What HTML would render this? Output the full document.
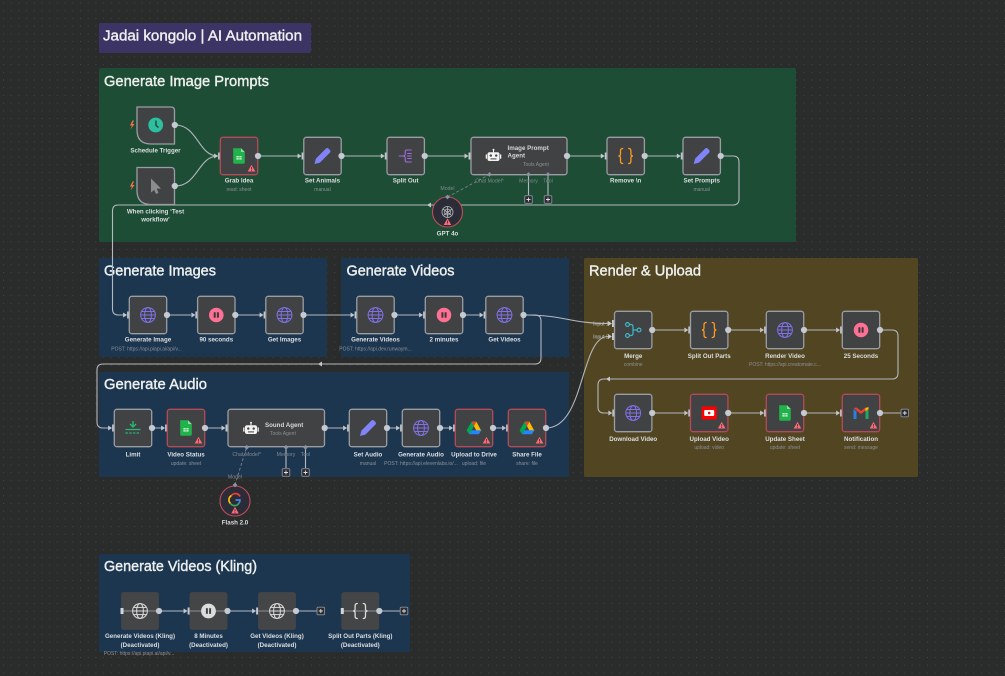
<!DOCTYPE html>
<html><head><meta charset="utf-8"><title>Jadai kongolo | AI Automation</title>
<style>
html,body{margin:0;padding:0;background:#2a2b2b;width:1005px;height:676px;overflow:hidden}
svg{display:block;font-family:"Liberation Sans",sans-serif;filter:blur(.3px)}
.h{fill:#eef0ee;stroke:#eef0ee;stroke-width:.38;font-size:14.5px}
.l{fill:#dcdee0;font-size:6.2px;font-weight:700;text-anchor:middle}
.s{fill:#8d9096;font-size:5px;text-anchor:middle}
.p{fill:#85888f;font-size:5.2px;text-anchor:middle}
.w{fill:none;stroke:#b4b8bf;stroke-width:1.1}
</style></head><body>
<svg width="1005" height="676" viewBox="0 0 1005 676" xmlns="http://www.w3.org/2000/svg">
<defs>
<pattern id="dots" x="3" y="2.5" width="7.7" height="7.7" patternUnits="userSpaceOnUse"><rect width="1" height="1" fill="#434444"/></pattern>
<g id="in"><path d="M-6 -2.5L-2 0L-6 2.5Z" fill="#c3c7ce"/><rect x="-2" y="-3.5" width="2.4" height="7" fill="#c3c7ce"/></g>
<circle id="out" r="3.1" fill="#c5c9d2"/>
<g id="box"><rect x="-18.7" y="-18.7" width="37.400" height="37.400" rx="2.500" fill="#414243" stroke="#9a9ea3" stroke-width="1.300"/></g>
<g id="warn"><path d="M0 -3.600L3.800 3H-3.800Z" fill="#ff6b76"/><rect x="-.4" y="-1.400" width=".8" height="2.400" fill="#3a2b30"/><rect x="-.4" y="1.500" width=".8" height=".8" fill="#3a2b30"/></g>
<g id="rbox"><rect x="-18.700" y="-18.700" width="37.400" height="37.400" rx="2.500" fill="#414243" stroke="#b54a57" stroke-width="1.300"/><use href="#warn" x="12.500" y="12.500"/></g>
<g id="n"><use href="#in" x="-18.900"/><use href="#box"/><use href="#out" x="19"/></g>
<g id="r"><use href="#in" x="-18.900"/><use href="#rbox"/><use href="#out" x="19"/></g>
<g id="globe" fill="none" stroke="#7f72e6" stroke-width="1"><circle r="7.400"/><ellipse rx="3.400" ry="7.400"/><path d="M-7.400 0H7.400M-6.500 -3.500H6.500M-6.500 3.500H6.500"/></g>
<g id="pause"><circle r="7.300" fill="#ff7095"/><rect x="-2.600" y="-2.800" width="2" height="5.600" rx=".5" fill="#39393b"/><rect x=".6" y="-2.800" width="2" height="5.600" rx=".5" fill="#39393b"/></g>
<path id="pencil" d="M-8 8L-6.600 2.600L3.400 -7.400Q4.800 -8.500 6 -7.400L7.400 -6Q8.500 -4.800 7.400 -3.400L-2.600 6.600Z" fill="#8183f8"/>
<g id="sheet"><path d="M-5.800 -7.800H2L5.800 -4V6.300Q5.800 7.800 4.300 7.800H-4.300Q-5.800 7.800 -5.800 6.300Z" fill="#21b34b"/><path d="M2 -7.800L5.800 -4H2Z" fill="#8fdca6"/><rect x="-2.600" y="0" width="5.200" height="3.600" fill="#c9efd4"/><path d="M0 0V3.600M-2.600 1.800H2.600" stroke="#21b34b" stroke-width=".6"/></g>
<g id="braces" fill="none" stroke="#ff9a1f" stroke-width="1.300" stroke-linecap="round"><path d="M-3 -7.500Q-5.200 -7.500 -5.200 -5V-2Q-5.200 0 -7.300 0Q-5.200 0 -5.200 2V5Q-5.200 7.500 -3 7.500"/><path d="M3 -7.500Q5.200 -7.500 5.200 -5V-2Q5.200 0 7.300 0Q5.200 0 5.200 2V5Q5.200 7.500 3 7.500"/></g>
<g id="robot"><rect x="-6" y="-3.800" width="12" height="8.800" rx="2" fill="#f3f3f3"/><rect x="-7.800" y="-1.600" width="1.300" height="4.400" rx=".5" fill="#f3f3f3"/><rect x="6.500" y="-1.600" width="1.300" height="4.400" rx=".5" fill="#f3f3f3"/><rect x="-.5" y="-6" width="1" height="2.400" fill="#f3f3f3"/><circle cy="-6.200" r="1" fill="#f3f3f3"/><circle cx="-2.700" cy="-.4" r="1.200" fill="#414243"/><circle cx="2.700" cy="-.4" r="1.200" fill="#414243"/><rect x="-3" y="2.400" width="6" height="1" fill="#414243"/></g>
<g id="drive"><path d="M-2.400 -6.200H2.400L7.400 3H2.600Z" fill="#fbbc04"/><path d="M-2.400 -6.200L0 -1.800L-4.900 6.200L-7.400 2.200Z" fill="#00a94f"/><path d="M-4.900 6.200L-2.400 2.200H7.400L4.900 6.200Z" fill="#2684fc"/><path d="M-2.400 -6.200H2.400L0 -1.800Z" fill="#ea4335"/></g>
<g id="dia"><path d="M0 -2.400L2.400 0L0 2.400L-2.400 0Z" fill="#8d91a0"/></g>
<g id="plus"><rect x="-3.800" y="-3.800" width="7.600" height="7.600" rx="1.200" fill="#2b2d33" stroke="#8a8e96" stroke-width=".9"/><path d="M-2 0H2M0 -2V2" stroke="#dedede" stroke-width=".9"/></g>
<g id="dbox"><rect x="-18.900" y="-18.900" width="37.800" height="37.800" rx="2.500" fill="#444547"/><path d="M-18.900 0H18.900" stroke="#8e9094" stroke-width="1"/></g>
<g id="dglobe" fill="#444547" stroke="#dcdcdc" stroke-width="1"><circle r="7.400"/><ellipse rx="3.400" ry="7.400"/><path d="M-7.400 0H7.400M-6.500 -3.600H6.500M-6.500 3.600H6.500"/></g>
</defs>

<rect width="1005" height="676" fill="#2a2b2b"/>
<rect width="1005" height="676" fill="url(#dots)"/>

<rect x="99" y="23" width="212" height="30" rx="1.500" fill="#3c3465"/>
<rect x="99" y="68" width="697" height="174" rx="1.500" fill="#1d4d35"/>
<rect x="99" y="258" width="228" height="99" rx="1.500" fill="#1c3650"/>
<rect x="341" y="258" width="228" height="99" rx="1.500" fill="#1c3650"/>
<rect x="584" y="258" width="334" height="219" rx="1.500" fill="#514522"/>
<rect x="99" y="372" width="470" height="105" rx="1.500" fill="#1c3650"/>
<rect x="99" y="554" width="311" height="98" rx="1.500" fill="#1c3650"/>

<text class="h" x="103" y="40.500" textLength="199" lengthAdjust="spacingAndGlyphs">Jadai kongolo | AI Automation</text>
<text class="h" x="104" y="86" textLength="165" lengthAdjust="spacingAndGlyphs">Generate Image Prompts</text>
<text class="h" x="104" y="275.500" textLength="112" lengthAdjust="spacingAndGlyphs">Generate Images</text>
<text class="h" x="346.500" y="275.500" textLength="108" lengthAdjust="spacingAndGlyphs">Generate Videos</text>
<text class="h" x="589" y="275.500" textLength="112" lengthAdjust="spacingAndGlyphs">Render &amp; Upload</text>
<text class="h" x="104" y="389" textLength="103" lengthAdjust="spacingAndGlyphs">Generate Audio</text>
<text class="h" x="104" y="571" textLength="153" lengthAdjust="spacingAndGlyphs">Generate Videos (Kling)</text>

<!-- wires -->
<g class="w">
<path d="M175 125C198 125 198 156 218 156"/>
<path d="M175 186C198 186 198 156 218 156"/>
<path d="M258 156H298M342 156H381M425 156H465M567 156H601M645 156H677"/>
<path d="M721 156H733Q739 156 739 162V199Q739 205 733 205H118Q112.500 205 112.500 211V309Q112.500 315 118.500 315H123"/>
<path d="M167 315H191M235.500 315H260M304 315H351M394.500 315H419M463 315H480"/>
<path d="M524 315C565 315 570 323.500 608 323.500"/>
<path d="M524 315H535Q541 315 541 321V358Q541 364 535 364H103Q97 364 97 370V422Q97 428 103 428H108"/>
<path d="M546 428C585 428 580 336.500 608 336.500"/>
<path d="M652 330H684M728 330H760M804 330H836"/>
<path d="M880 330H892Q898 330 898 336V373Q898 379 892 379H604Q598 379 598 385V407Q598 413 604 413H608"/>
<path d="M652 413H684M728 413H760M804 413H836M880 413H901"/>
<path d="M152 428H161M205 428H222M325 428H343M387 428H396M440 428H449M493 428H502"/>
<path d="M528.500 175V195M548 175V195M286 448V468M305.500 448V468"/>
<path d="M159 611H184M227.500 611H252M296 611H317M379 611H400"/>
</g>
<path d="M447.500 197L489.500 174.500M235 485L246.500 447.500" fill="none" stroke="#7c808c" stroke-width=".9" stroke-dasharray="3 2"/>
<path d="M431 202.500L427 205L431 207.500ZM322 361.500L318 364L322 366.500ZM610 376.500L606 379L610 381.500Z" fill="#c3c7ce"/>

<!-- triggers -->
<path d="M137 107H171Q174.500 107 174.500 110.500V144H151Q137 144 137 130Z" fill="#414243" stroke="#9a9ea3" stroke-width="1.300"/>
<path d="M137 167.500H171Q174.500 167.500 174.500 171V204.500H151Q137 204.500 137 190.500Z" fill="#414243" stroke="#9a9ea3" stroke-width="1.300"/>
<use href="#out" x="174.800" y="125"/><use href="#out" x="174.800" y="186"/>
<circle cx="155.700" cy="125" r="7.400" fill="#2cc0a0"/><path d="M156 120.500V125.500L158.500 127.500" fill="none" stroke="#25433c" stroke-width="1.400"/>
<path d="M151 178.500L161 188.500L156.800 188.800L158.500 193L156 194L154.200 190L151 192.500Z" fill="#8b8c8e"/>
<path d="M132.500 120.500L130 125.500H132L130.500 129.500L134.500 124H132.300L134 120.500Z" fill="#ff6d4d"/>
<path d="M132.500 181.500L130 186.500H132L130.500 190.500L134.500 185H132.300L134 181.500Z" fill="#ff6d4d"/>
<text class="l" x="155.500" y="152.500">Schedule Trigger</text>
<text class="l" x="155.500" y="213.500">When clicking ‘Test</text>
<text class="l" x="155.500" y="221.500">workflow’</text>

<!-- row 1 -->
<g transform="translate(239,156)"><use href="#r"/><use href="#sheet"/></g>
<text class="l" x="239" y="182.500">Grab Idea</text><text class="s" x="239" y="191">read: sheet</text>
<g transform="translate(322.500,156)"><use href="#n"/><use href="#pencil"/></g>
<text class="l" x="322.500" y="182.500">Set Animals</text><text class="s" x="322.500" y="191">manual</text>
<g transform="translate(405.700,156)"><use href="#n"/><path d="M-7 0H-2.500M-2.500 0Q-.5 0 -.5 -2V-4.500Q-.5 -6 1 -6H6M1.500 -2.500H6M1.500 0H6M1.500 2.500H6M-2.500 0Q-.5 0 -.5 2V4.500Q-.5 6 1 6H6" fill="none" stroke="#a06ce0" stroke-width="1.100"/></g>
<text class="l" x="405.700" y="182.500">Split Out</text>

<use href="#in" x="470.500" y="156"/>
<rect x="471" y="137.300" width="96" height="37.400" rx="2.500" fill="#414243" stroke="#9a9ea3" stroke-width="1.300"/>
<use href="#out" x="567" y="156"/>
<use href="#robot" x="493.500" y="156"/>
<text x="507.500" y="149.800" fill="#d6d7d9" font-size="6.200" font-weight="700">Image Prompt</text>
<text x="507.500" y="157.500" fill="#d6d7d9" font-size="6.200" font-weight="700">Agent</text>
<text x="523" y="166" fill="#8d9096" font-size="5">Tools Agent</text>
<use href="#dia" x="489.500" y="174.500"/><use href="#dia" x="528.500" y="174.500"/><use href="#dia" x="548" y="174.500"/>
<text class="p" x="489.500" y="182.700">Chat Model*</text><text class="p" x="528.500" y="182.700">Memory</text><text class="p" x="548" y="182.700">Tool</text>
<use href="#plus" x="528.500" y="199.500"/><use href="#plus" x="548" y="199.500"/>

<g transform="translate(625.700,156)"><use href="#n"/><use href="#braces"/></g>
<text class="l" x="625.700" y="182.500">Remove \n</text>
<g transform="translate(701.700,156)"><use href="#n"/><use href="#pencil"/></g>
<text class="l" x="701.700" y="182.500">Set Prompts</text><text class="s" x="701.700" y="191">manual</text>

<circle cx="447.500" cy="212" r="15" fill="#2b2c38" stroke="#c04d5a" stroke-width="1.100"/>
<g fill="none" stroke="#b8b9bd" stroke-width=".8"><circle cx="447.500" cy="212" r="5.500"/><circle cx="447.500" cy="212" r="3"/><path d="M443 209L451 215M452 209L444 215M447.500 206.500V217.500"/></g>
<use href="#warn" x="447.500" y="222"/>
<use href="#dia" x="447.500" y="197"/>
<text class="p" x="447.500" y="190">Model</text>
<text class="l" x="447.500" y="235.500">GPT 4o</text>

<!-- images / videos -->
<g transform="translate(148,315)"><use href="#n"/><use href="#globe"/></g>
<text class="l" x="148" y="341.500">Generate Image</text><text class="s" x="146.500" y="350.300">POST: https://api.piapi.ai/api/v...</text>
<g transform="translate(216.300,315)"><use href="#n"/><use href="#pause"/></g>
<text class="l" x="216.300" y="341.500">90 seconds</text>
<g transform="translate(284.500,315)"><use href="#n"/><use href="#globe"/></g>
<text class="l" x="284.500" y="341.500">Get Images</text>
<g transform="translate(375.500,315)"><use href="#n"/><use href="#globe"/></g>
<text class="l" x="375.500" y="341.500">Generate Videos</text><text class="s" x="375.500" y="350.300">POST: https://api.dev.runwaym...</text>
<g transform="translate(444,315)"><use href="#n"/><use href="#pause"/></g>
<text class="l" x="444" y="341.500">2 minutes</text>
<g transform="translate(504.500,315)"><use href="#n"/><use href="#globe"/></g>
<text class="l" x="504.500" y="341.500">Get Videos</text>

<!-- render row 1 -->
<use href="#in" x="614" y="323.500"/><use href="#in" x="614" y="336.500"/>
<use href="#box" x="633.200" y="330"/><use href="#out" x="652.200" y="330"/>
<g fill="none" stroke="#3fb7cb" stroke-width="1.200"><circle cx="627.500" cy="324.500" r="1.900"/><circle cx="627.500" cy="335.500" r="1.900"/><circle cx="639" cy="330" r="1.900"/><path d="M629.500 324.500H631Q633 324.500 633 327V333Q633 335.500 631 335.500H629.500M633 330H637"/></g>
<text class="p" x="601" y="325.300" style="fill:#c2c3c3">Input 1</text><text class="p" x="601" y="338.300" style="fill:#c2c3c3">Input 2</text>
<text class="l" x="633.200" y="358">Merge</text><text class="s" x="633.200" y="366">combine</text>
<g transform="translate(709.200,330)"><use href="#n"/><use href="#braces"/></g>
<text class="l" x="709.200" y="358">Split Out Parts</text>
<g transform="translate(785,330)"><use href="#n"/><use href="#globe"/></g>
<text class="l" x="785" y="358">Render Video</text><text class="s" x="785" y="366">POST: https://api.creatomate.c...</text>
<g transform="translate(861,330)"><use href="#n"/><use href="#pause"/></g>
<text class="l" x="861" y="358">25 Seconds</text>

<!-- render row 2 -->
<g transform="translate(633.200,413)"><use href="#n"/><use href="#globe"/></g>
<text class="l" x="633.200" y="441">Download Video</text>
<g transform="translate(709.200,413)"><use href="#r"/><rect x="-7.500" y="-6.500" width="15" height="13" fill="#ff0000"/><rect x="-5" y="-3" width="10" height="6" rx="1" fill="#fff"/><circle r="1.300" fill="#ff0000"/></g>
<text class="l" x="709.200" y="441">Upload Video</text><text class="s" x="709.200" y="449">upload: video</text>
<g transform="translate(785,413)"><use href="#r"/><use href="#sheet"/></g>
<text class="l" x="785" y="441">Update Sheet</text><text class="s" x="785" y="449">update: sheet</text>
<g transform="translate(861,413)"><use href="#r"/><path d="M-7.500 -4V6H-4.500V-1.500L-7.500 -4Z" fill="#2a7fe0"/><path d="M7.500 -4V6H4.500V-1.500L7.500 -4Z" fill="#22a565"/><path d="M-7.500 -5L0 1L7.500 -5L4.500 -5.500L0 -2L-4.500 -5.500Z" fill="#ea4335"/><path d="M4.500 -1.500L7.500 -4V-6L4.500 -5Z" fill="#fbbc04"/></g>
<text class="l" x="861" y="441">Notification</text><text class="s" x="861" y="449">send: message</text>
<use href="#plus" x="904.800" y="413"/>

<!-- audio -->
<g transform="translate(133,428)"><use href="#n"/><path d="M0 -7V-1.500M-3 -4L0 -1L3 -4" fill="none" stroke="#2bb673" stroke-width="1.400"/><path d="M-7.500 1.500H7.500" stroke="#2bb673" stroke-width="1.300"/><path d="M-7.500 5H7.500" stroke="#2bb673" stroke-width="1.300" stroke-dasharray="2.400 1.300"/></g>
<text class="l" x="133" y="456.500">Limit</text>
<g transform="translate(186,428)"><use href="#r"/><use href="#sheet"/></g>
<text class="l" x="186" y="456.500">Video Status</text><text class="s" x="186" y="464.800">update: sheet</text>

<use href="#in" x="227.500" y="428"/>
<rect x="228" y="409.300" width="96.500" height="37.400" rx="2.500" fill="#414243" stroke="#9a9ea3" stroke-width="1.300"/>
<use href="#out" x="324.700" y="428"/>
<use href="#robot" x="251" y="429"/>
<text x="265" y="427" fill="#d6d7d9" font-size="6.200" font-weight="700">Sound Agent</text>
<text x="270" y="435" fill="#8d9096" font-size="5">Tools Agent</text>
<use href="#dia" x="246.700" y="447.300"/><use href="#dia" x="286" y="447.300"/><use href="#dia" x="305.500" y="447.300"/>
<text class="p" x="246.700" y="456">Chat Model*</text><text class="p" x="286" y="456">Memory</text><text class="p" x="305.500" y="456">Tool</text>
<use href="#plus" x="286" y="472.500"/><use href="#plus" x="305.500" y="472.500"/>

<circle cx="235" cy="501" r="15" fill="#2b2c38" stroke="#c04d5a" stroke-width="1.100"/>
<g fill="none" stroke-width="1.700"><path d="M240 496.500A5 5 0 0 0 231.500 495.500" stroke="#ea4335"/><path d="M231.500 495.500A5 5 0 0 0 230.500 503.500" stroke="#fbbc04"/><path d="M230.500 503.500A5 5 0 0 0 239 503" stroke="#34a853"/><path d="M239 503A5 5 0 0 0 240 500H235.500" stroke="#4285f4"/></g>
<use href="#warn" x="235" y="510.500"/>
<use href="#dia" x="235" y="485"/>
<text class="p" x="235" y="478.700">Model</text>
<text class="l" x="235" y="524.500">Flash 2.0</text>

<g transform="translate(368,428)"><use href="#n"/><use href="#pencil"/></g>
<text class="l" x="368" y="456.500">Set Audio</text><text class="s" x="368" y="464.800">manual</text>
<g transform="translate(421,428)"><use href="#n"/><use href="#globe"/></g>
<text class="l" x="421" y="456.500">Generate Audio</text><text class="s" x="421" y="464.800">POST: https://api.elevenlabs.io/...</text>
<g transform="translate(474,428)"><use href="#r"/><use href="#drive"/></g>
<text class="l" x="474" y="456.500">Upload to Drive</text><text class="s" x="474" y="464.800">upload: file</text>
<g transform="translate(527,428)"><use href="#r"/><use href="#drive"/></g>
<text class="l" x="527" y="456.500">Share File</text><text class="s" x="527" y="464.800">share: file</text>

<!-- kling -->
<g transform="translate(140,611)"><use href="#dbox"/><rect x="-19.500" y="-3" width="3" height="6" fill="#d5d6d8"/><use href="#dglobe"/><use href="#out" x="19"/></g>
<text class="l" x="140" y="638">Generate Videos (Kling)</text><text class="l" x="140" y="647">(Deactivated)</text>
<text class="s" x="139" y="655.200">POST: https://api.piapi.ai/api/v...</text>
<g transform="translate(208.500,611)"><use href="#in" x="-18.900"/><use href="#dbox"/><circle r="7.400" fill="#dcdcdc"/><rect x="-2.600" y="-2.800" width="2" height="5.600" fill="#444547"/><rect x=".6" y="-2.800" width="2" height="5.600" fill="#444547"/><use href="#out" x="19"/></g>
<text class="l" x="208.500" y="638">8 Minutes</text><text class="l" x="208.500" y="647">(Deactivated)</text>
<g transform="translate(277,611)"><use href="#in" x="-18.900"/><use href="#dbox"/><use href="#dglobe"/><use href="#out" x="19"/></g>
<text class="l" x="277" y="638">Get Videos (Kling)</text><text class="l" x="277" y="647">(Deactivated)</text>
<g transform="translate(360.300,611)"><use href="#dbox"/><rect x="-19.500" y="-3" width="3" height="6" fill="#d5d6d8"/><g fill="none" stroke="#dcdcdc" stroke-width="1.300" stroke-linecap="round"><path d="M-3 -7.500Q-5.200 -7.500 -5.200 -5V-2Q-5.200 0 -7.300 0Q-5.200 0 -5.200 2V5Q-5.200 7.500 -3 7.500"/><path d="M3 -7.500Q5.200 -7.500 5.200 -5V-2Q5.200 0 7.300 0Q5.200 0 5.200 2V5Q5.200 7.500 3 7.500"/></g><use href="#out" x="19"/></g>
<text class="l" x="360.300" y="638">Split Out Parts (Kling)</text><text class="l" x="360.300" y="647">(Deactivated)</text>
<use href="#plus" x="320.800" y="611"/><use href="#plus" x="404" y="611"/>
</svg>
</body></html>
